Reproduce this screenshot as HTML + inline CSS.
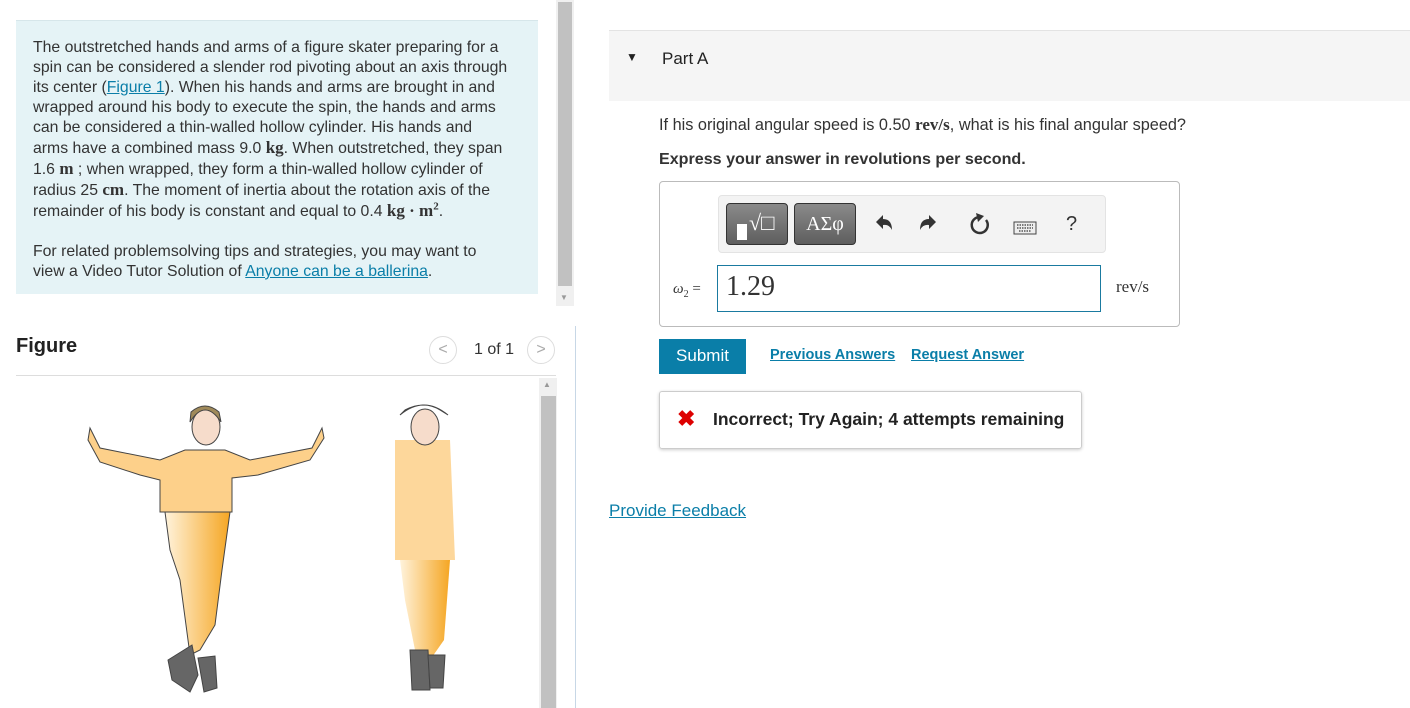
<!DOCTYPE html>
<html><head><style>
body{margin:0;width:1410px;height:708px;overflow:hidden;background:#fff;font-family:"Liberation Sans",Arial,sans-serif;color:#333;position:relative}
.a{position:absolute}
a{color:#0a7ea8;text-decoration:underline}
.m{font-family:"Liberation Serif",serif;font-weight:bold;font-size:17px}
</style></head><body>
<div class="a" style="left:16px;top:20px;width:522px;height:273px;background:#e5f3f6;border-top:1px solid #d6e6ea"></div>
<div class="a" style="left:33px;top:38px;width:477px;font-size:15.8px;line-height:20px;color:#333">The outstretched hands and arms of a figure skater preparing for a spin can be considered a slender rod pivoting about an axis through its center (<a>Figure 1</a>). When his hands and arms are brought in and wrapped around his body to execute the spin, the hands and arms can be considered a thin-walled hollow cylinder. His hands and arms have a combined mass 9.0 <span class="m">kg</span>. When outstretched, they span 1.6 <span class="m">m</span> ; when wrapped, they form a thin-walled hollow cylinder of radius 25 <span class="m">cm</span>. The moment of inertia about the rotation axis of the remainder of his body is constant and equal to 0.4 <span class="m">kg · m<sup style="font-size:11px;line-height:0">2</sup></span>.
<div style="height:20px"></div>For related problemsolving tips and strategies, you may want to view a Video Tutor Solution of <a>Anyone can be a ballerina</a>.</div>
<div class="a" style="left:556px;top:0;width:18px;height:306px;background:#f0f0f0"></div>
<div class="a" style="left:558px;top:2px;width:14px;height:284px;background:#c1c1c1"></div>
<div class="a" style="left:560px;top:293px;font-size:8px;color:#999">▼</div>
<div class="a" style="left:575px;top:326px;width:1px;height:382px;background:#c7d7e6"></div>
<div class="a" style="left:16px;top:335px;font-size:20px;font-weight:bold;color:#222">Figure</div>
<div class="a" style="left:429px;top:336px;width:26px;height:26px;border:1px solid #ddd;border-radius:50%;text-align:center;line-height:25px;color:#aaa;font-size:16px">&lt;</div>
<div class="a" style="left:474px;top:341px;font-size:16px;color:#333">1 of 1</div>
<div class="a" style="left:527px;top:336px;width:26px;height:26px;border:1px solid #ddd;border-radius:50%;text-align:center;line-height:25px;color:#aaa;font-size:16px">&gt;</div>
<div class="a" style="left:16px;top:375px;width:540px;height:1px;background:#ddd"></div>
<div class="a" style="left:539px;top:378px;width:18px;height:330px;background:#f0f0f0"></div>
<div class="a" style="left:541px;top:396px;width:15px;height:312px;background:#c1c1c1"></div>
<div class="a" style="left:543px;top:380px;font-size:8px;color:#999">▲</div>
<svg class="a" style="left:0;top:320px" width="540" height="388">
<defs><linearGradient id="g" x1="0" x2="1"><stop offset="0" stop-color="#fff3dc"/><stop offset="1" stop-color="#f5a623"/></linearGradient></defs>
<g stroke="#444" stroke-width="1">
<path d="M90 108 L100 128 L160 140 L185 130 L225 130 L250 140 L312 128 L322 108 L324 118 L310 140 L258 155 L232 158 L232 192 L180 192 L160 192 L160 160 L140 155 L100 142 L88 120Z" fill="#fdd08a"/>
<path d="M165 192 L230 192 L222 250 L215 305 L200 330 L190 335 L180 260 L170 230Z" fill="url(#g)"/>
<ellipse cx="206" cy="107" rx="14" ry="18" fill="#f6dccb"/>
<path d="M190 102 Q205 78 221 102 L219 92 Q205 80 191 92Z" fill="#a08a5a"/>
<path d="M168 340 L192 325 L198 355 L190 372 L172 360Z" fill="#666"/>
<path d="M198 338 L215 336 L217 368 L204 372Z" fill="#666"/>
<path d="M395 120 L450 120 L455 240 L395 240Z" fill="#fdd08a" opacity=".85" stroke="none"/>
<path d="M400 240 L450 240 L444 320 L430 340 L415 330 L405 280Z" fill="url(#g)" stroke="none"/>
<ellipse cx="425" cy="107" rx="14" ry="18" fill="#f6dccb"/>
<path d="M400 95 Q424 75 448 95 L440 90 Q424 80 405 90Z" fill="#a08a5a"/>
<path d="M410 330 L428 330 L430 370 L412 370Z" fill="#666"/>
<path d="M428 335 L445 335 L443 368 L430 368Z" fill="#666"/>
</g></svg>
<div class="a" style="left:609px;top:30px;width:801px;height:70px;background:#f5f5f5;border-top:1px solid #e3e3e3"></div>
<div class="a" style="left:626px;top:50px;font-size:12px;color:#222">▼</div>
<div class="a" style="left:662px;top:49px;font-size:17px;color:#222">Part A</div>
<div class="a" style="left:659px;top:115px;font-size:16.3px">If his original angular speed is 0.50 <span class="m">rev/s</span>, what is his final angular speed?</div>
<div class="a" style="left:659px;top:150px;font-size:16.1px;font-weight:bold">Express your answer in revolutions per second.</div>
<div class="a" style="left:659px;top:181px;width:519px;height:144px;border:1px solid #bbb;border-radius:4px"></div>
<div class="a" style="left:718px;top:195px;width:386px;height:56px;background:#f3f3f3;border:1px solid #e3e3e3;border-radius:4px"></div>
<div class="a" style="left:726px;top:203px;width:60px;height:40px;background:linear-gradient(#8a8a8a,#5e5e5e);border:1px solid #333;border-radius:4px"><div style="position:absolute;left:10px;top:20px;width:10px;height:16px;background:#fff"></div><div style="position:absolute;left:22px;top:6px;color:#fff;font-size:22px;font-family:'Liberation Serif'">√□</div></div>
<div class="a" style="left:794px;top:203px;width:60px;height:40px;background:linear-gradient(#8a8a8a,#5e5e5e);border:1px solid #333;border-radius:4px;color:#fff;font-family:'Liberation Serif',serif;font-size:20px;text-align:center;line-height:40px">ΑΣφ</div>
<svg class="a" style="left:872px;top:212px" width="180" height="26">
<path d="M4 10 L11 3 L11 7 Q20 7 20 18 Q17 12 11 13 L11 17Z" fill="#333"/>
<path d="M64 10 L57 3 L57 7 Q48 7 48 18 Q51 12 57 13 L57 17Z" fill="#333"/>
<path d="M108 5 A8 8 0 1 0 114 8" fill="none" stroke="#333" stroke-width="2.5"/><path d="M104 1 L112 4 L106 10Z" fill="#333"/>
<rect x="142" y="10" width="22" height="12" fill="#eee" stroke="#444"/><path d="M145 13h16M145 16h16M147 19h12" stroke="#555" stroke-width="1.5" stroke-dasharray="1.5 1"/>
</svg>
<div class="a" style="left:1066px;top:213px;font-size:20px;color:#333">?</div>
<div class="a" style="left:673px;top:281px;font-family:'Liberation Serif',serif;font-size:15px"><i>ω</i><sub style="font-size:10px">2</sub> =</div>
<div class="a" style="left:717px;top:265px;width:382px;height:45px;border:1px solid #1a7aa0"></div>
<div class="a" style="left:726px;top:271px;font-family:'Liberation Serif',serif;font-size:28px;color:#333">1.29</div>
<div class="a" style="left:1116px;top:277px;font-family:'Liberation Serif',serif;font-size:17px">rev/s</div>
<div class="a" style="left:659px;top:339px;width:87px;height:35px;background:#0a7ea8;color:#fff;font-size:17px;text-align:center;line-height:34px">Submit</div>
<div class="a" style="left:770px;top:347px;font-size:14.5px;font-weight:bold"><a>Previous Answers</a></div>
<div class="a" style="left:911px;top:347px;font-size:14.5px;font-weight:bold"><a>Request Answer</a></div>
<div class="a" style="left:659px;top:391px;width:421px;height:56px;border:1px solid #ccc;border-radius:3px;box-shadow:0 1px 3px rgba(0,0,0,.2)"></div>
<div class="a" style="left:677px;top:406px;font-size:22px;color:#d00;font-weight:bold">✖</div>
<div class="a" style="left:713px;top:409px;font-size:17.5px;font-weight:bold;color:#222">Incorrect; Try Again; 4 attempts remaining</div>
<div class="a" style="left:609px;top:501px;font-size:17px"><a>Provide Feedback</a></div>
</body></html>
